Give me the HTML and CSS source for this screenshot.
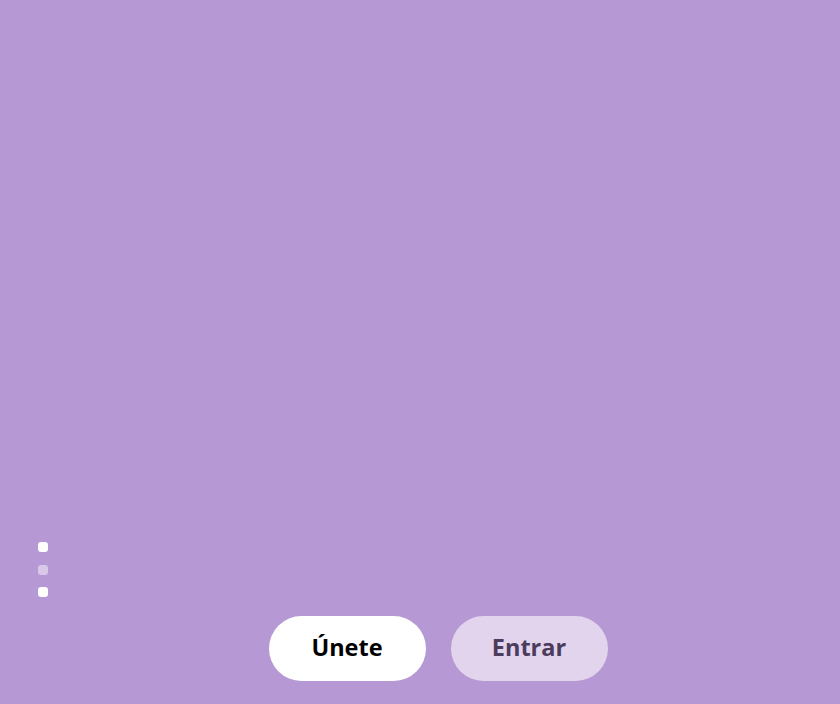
FILE: index.html
```html
<!DOCTYPE html>
<html lang="es">
<head>
<meta charset="utf-8">
<link rel="stylesheet" href="styles.css">
</head>
<body>
<main class="screen">
  <div class="stage"></div>
  <div class="dots">
    <span class="dot"></span>
    <span class="dot dim"></span>
    <span class="dot"></span>
  </div>
  <div class="actions">
    <button class="btn primary">Únete</button>
    <button class="btn secondary">Entrar</button>
  </div>
</main>
</body>
</html>
```
FILE: styles.css
```css
html, body {
  margin: 0;
  padding: 0;
  height: 100%;
}
body {
  background: #b598d4;
  font-family: "Open Sans", "Noto Sans", sans-serif;
}
.screen {
  height: 704px;
  display: flex;
  flex-direction: column;
}
.stage {
  flex: 1;
}
.dots {
  display: flex;
  flex-direction: column;
  gap: 12.5px;
  padding-left: 38px;
  margin-bottom: 19px;
}
.dot {
  width: 10px;
  height: 10px;
  border-radius: 3px;
  background: #ffffff;
}
.dot.dim {
  background: #d9c8ea;
}
.actions {
  display: flex;
  justify-content: center;
  gap: 25px;
  padding-left: 36px;
  margin-bottom: 23px;
}
.btn {
  width: 157px;
  height: 65px;
  border: none;
  border-radius: 33px;
  font-family: "Open Sans", "Noto Sans", sans-serif;
  font-weight: 700;
  font-size: 23.5px;
  padding: 0 0 3px;
  cursor: pointer;
}
.primary {
  background: #ffffff;
  color: #000000;
}
.secondary {
  background: #e2d4ed;
  color: #4b3b5d;
}
```
